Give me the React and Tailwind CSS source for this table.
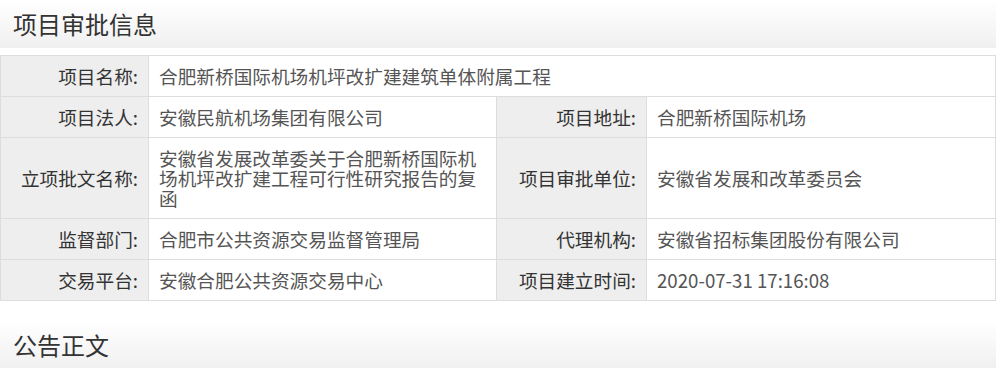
import React from 'react'

const labelCls = 'w-[148px] bg-[#eeeeee] border border-[#dddddd] px-[10px] py-[10px] text-right align-middle text-[#333333] font-normal'
const valueCls = 'border border-[#dddddd] px-[10px] py-[10px] text-left align-middle text-[#555555]'

function SectionTitle({ children }) {
  return (
    <div className="h-[48px] w-[996px] flex items-center px-[13px] bg-gradient-to-b from-[#ffffff] to-[#f0f0f0] text-[24px] text-[#333333]">
      {children}
    </div>
  )
}

export default function App() {
  return (
    <div className="w-[998px] h-[368px] overflow-hidden bg-white font-['Noto_Sans_CJK_SC','Microsoft_YaHei',sans-serif]">
      <SectionTitle>项目审批信息</SectionTitle>

      {/* Info table */}
      <table className="mt-[7px] w-[996px] border-collapse table-fixed text-[18.67px] leading-[20px]">
        <colgroup>
          <col className="w-[148px]" />
          <col className="w-[348px]" />
          <col className="w-[150px]" />
          <col />
        </colgroup>
        <tbody>
          <tr>
            <th className={labelCls}>项目名称:</th>
            <td className={valueCls} colSpan={3}>合肥新桥国际机场机坪改扩建建筑单体附属工程</td>
          </tr>
          <tr>
            <th className={labelCls}>项目法人:</th>
            <td className={valueCls}>安徽民航机场集团有限公司</td>
            <th className={labelCls}>项目地址:</th>
            <td className={valueCls}>合肥新桥国际机场</td>
          </tr>
          <tr>
            <th className={labelCls}>立项批文名称:</th>
            <td className={valueCls}>安徽省发展改革委关于合肥新桥国际机场机坪改扩建工程可行性研究报告的复函</td>
            <th className={labelCls}>项目审批单位:</th>
            <td className={valueCls}>安徽省发展和改革委员会</td>
          </tr>
          <tr>
            <th className={labelCls}>监督部门:</th>
            <td className={valueCls}>合肥市公共资源交易监督管理局</td>
            <th className={labelCls}>代理机构:</th>
            <td className={valueCls}>安徽省招标集团股份有限公司</td>
          </tr>
          <tr>
            <th className={labelCls}>交易平台:</th>
            <td className={valueCls}>安徽合肥公共资源交易中心</td>
            <th className={labelCls}>项目建立时间:</th>
            <td className={valueCls}>2020-07-31 17:16:08</td>
          </tr>
        </tbody>
      </table>

      <div className="mt-[20px]">
        <SectionTitle>公告正文</SectionTitle>
      </div>
    </div>
  )
}
